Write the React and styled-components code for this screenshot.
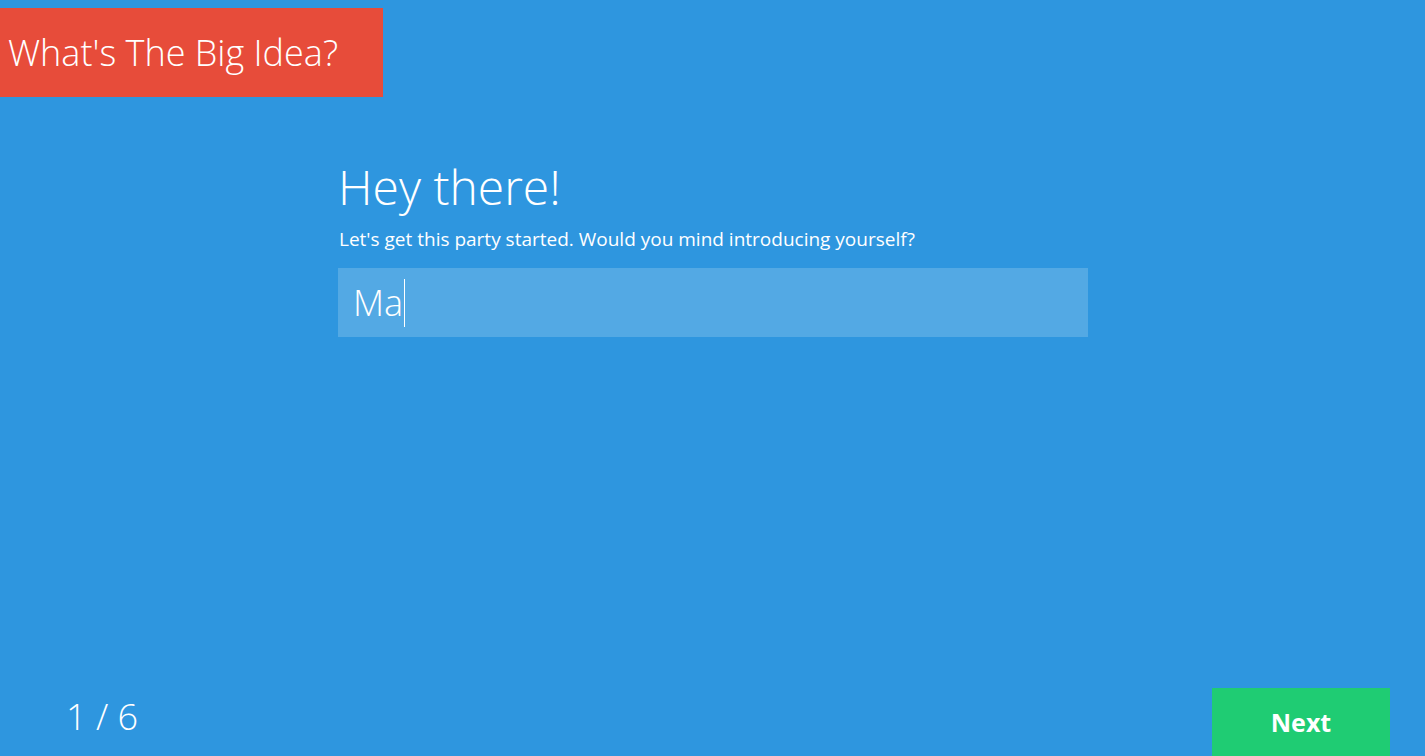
import React from "react";
import styled, { createGlobalStyle } from "styled-components";

const Global = createGlobalStyle`
  html, body { margin: 0; padding: 0; }
  body {
    background: #2e96df;
    font-family: "Open Sans", "Noto Sans", sans-serif;
    color: #fff;
  }
  * { box-sizing: border-box; }
`;

const Page = styled.div`
  height: 756px;
  display: flex;
  flex-direction: column;
  background: #2e96df;
  overflow: hidden;
`;

const Header = styled.header`
  padding-top: 8px;
  display: flex;
`;

const Brand = styled.h1`
  margin: 0;
  width: 383px;
  height: 89px;
  background: #e74c3a;
  display: flex;
  align-items: center;
  padding-left: 8px;
  padding-bottom: 0;
  font-weight: 300;
  font-size: 36px;
  color: #fff;
  letter-spacing: 0;
`;

const Main = styled.main`
  flex: 1;
  display: flex;
  justify-content: center;
`;

const Card = styled.section`
  width: 750px;
  margin-left: 1px;
  padding-top: 60px;
`;

const Heading = styled.h2`
  margin: 0 0 0 0;
  font-weight: 300;
  font-size: 48px;
  line-height: 60px;
`;

const Lead = styled.p`
  margin: 10px 0 0 1px;
  font-size: 19px;
  font-weight: 400;
  line-height: 24px;
  letter-spacing: 0;
`;

const Field = styled.div`
  margin-top: 17px;
  height: 69px;
  background: rgba(255, 255, 255, 0.18);
  display: flex;
  align-items: center;
  padding-left: 15px;
  font-size: 36px;
  font-weight: 300;
`;

const Caret = styled.span`
  display: inline-block;
  width: 1px;
  height: 48px;
  background: #fff;
  margin-left: 1px;
`;

const Footer = styled.footer`
  height: 68px;
  display: flex;
  justify-content: space-between;
  align-items: stretch;
  padding-right: 35px;
`;

const Counter = styled.div`
  padding-left: 66px;
  font-size: 36px;
  font-weight: 300;
  line-height: 58px;
`;

const NextButton = styled.button`
  width: 178px;
  border: none;
  background: #1fcc73;
  color: #fff;
  font-family: "Open Sans", "Noto Sans", sans-serif;
  font-weight: 700;
  font-size: 25px;
  padding: 0;
  cursor: pointer;
`;

export default function App() {
  return (
    <>
      <Global />
      <Page>
        <Header>
          <Brand>What's The Big Idea?</Brand>
        </Header>
        <Main>
          <Card>
            <Heading>Hey there!</Heading>
            <Lead>Let's get this party started. Would you mind introducing yourself?</Lead>
            <Field>
              Ma<Caret />
            </Field>
          </Card>
        </Main>
        <Footer>
          <Counter>1 / 6</Counter>
          <NextButton>Next</NextButton>
        </Footer>
      </Page>
    </>
  );
}
